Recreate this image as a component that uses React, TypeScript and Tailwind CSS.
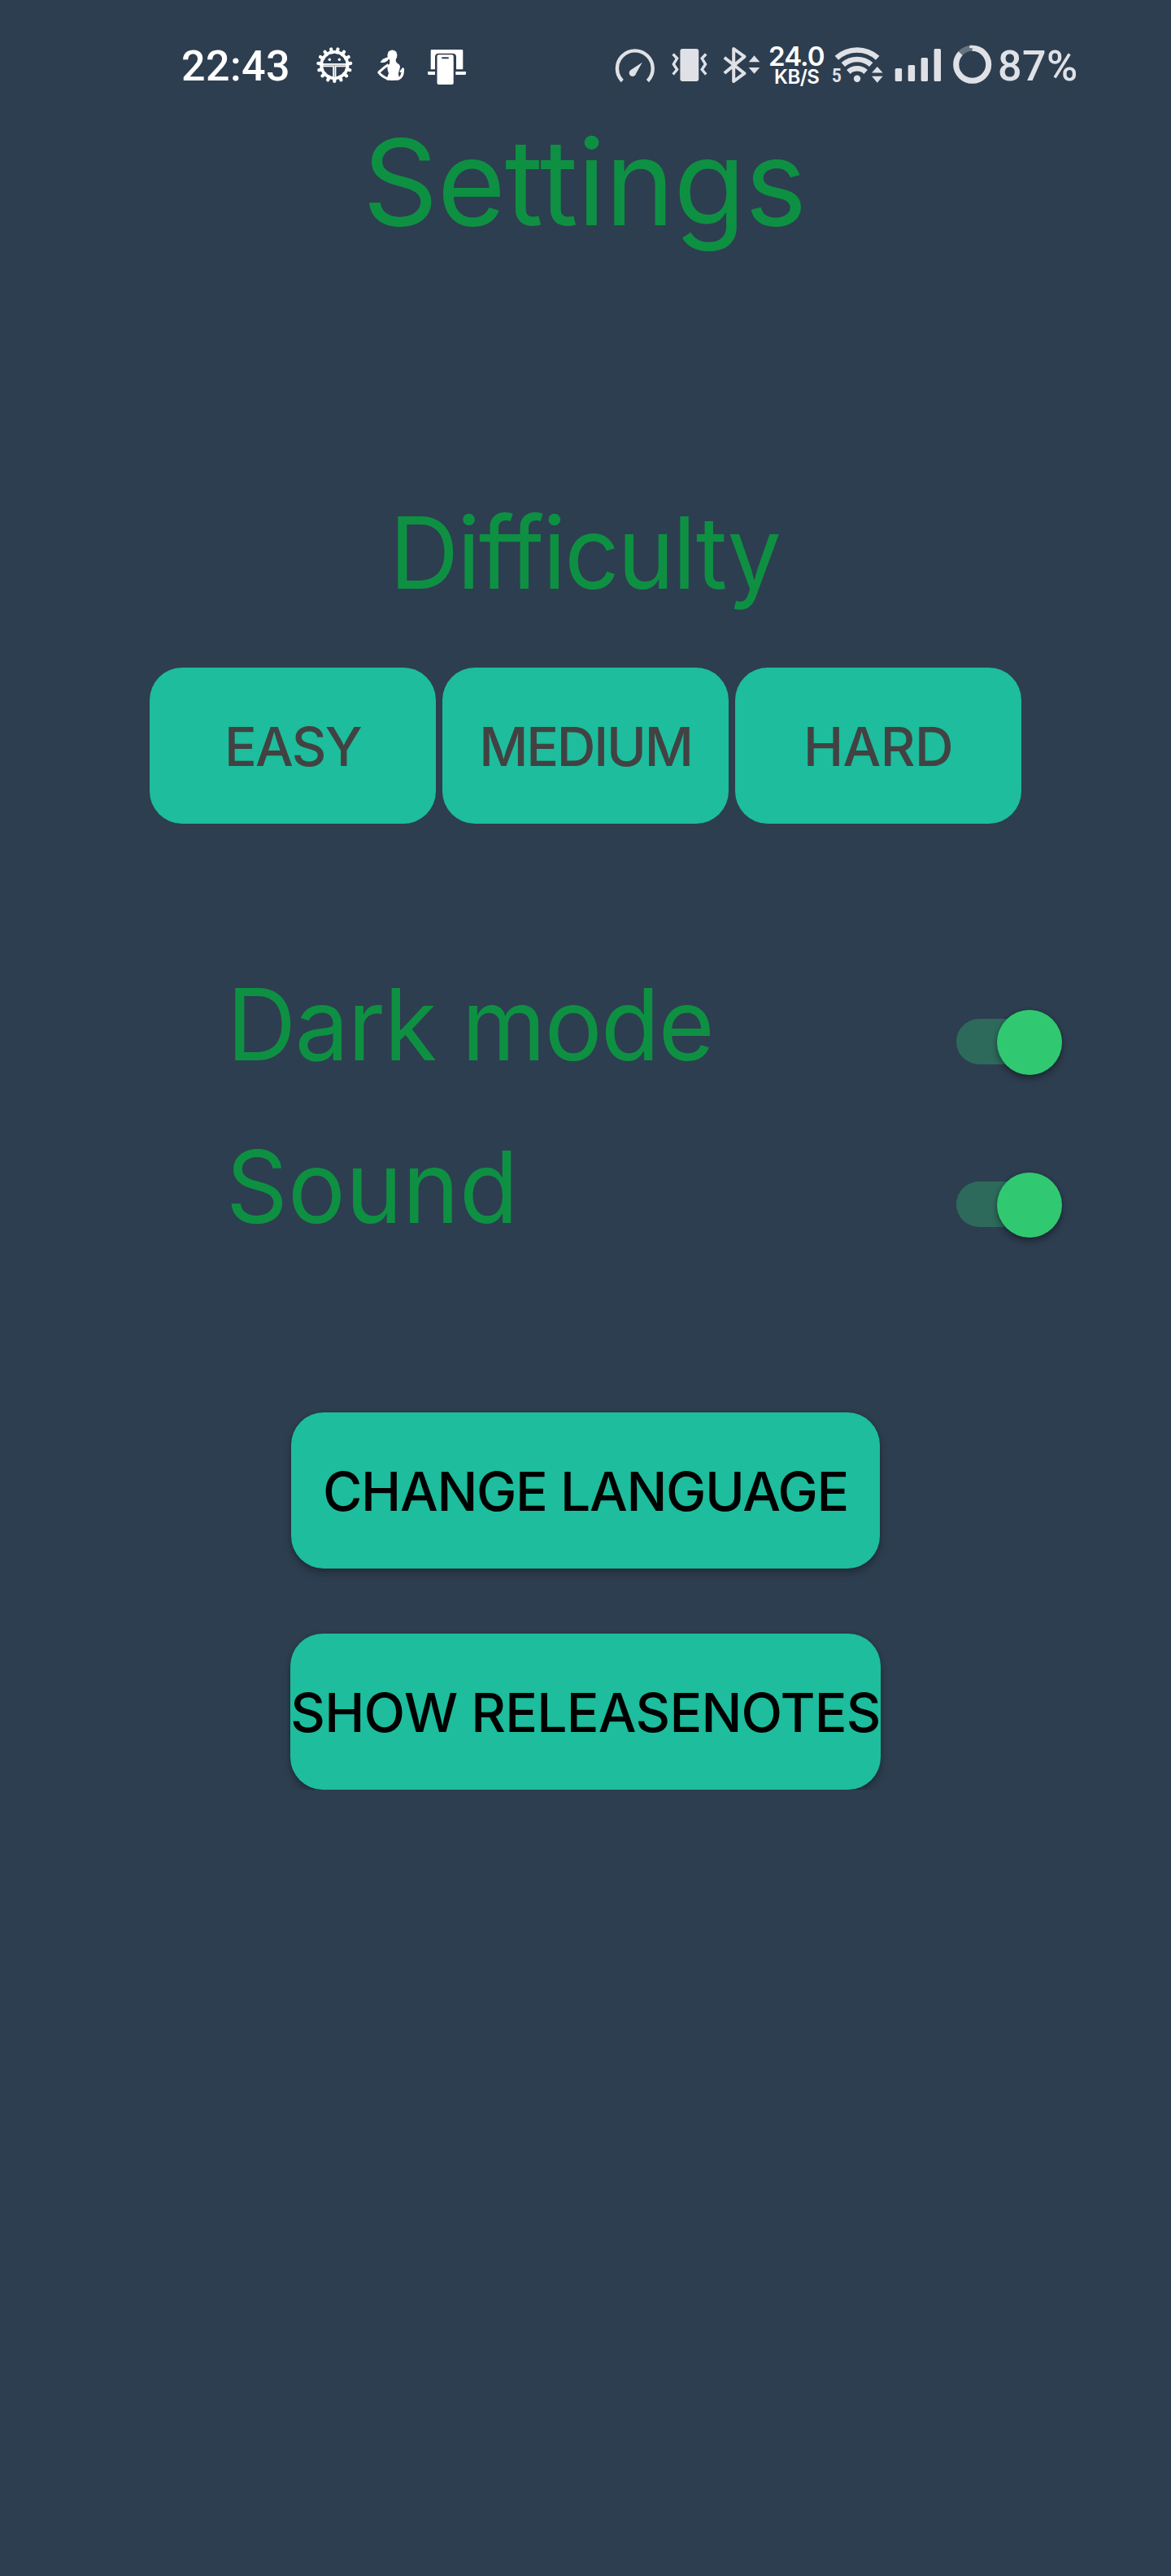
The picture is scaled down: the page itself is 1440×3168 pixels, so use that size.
import React from 'react';

const TEETH = Array.from({ length: 15 }, (_, i) => i * 24 + 12);

function GearIcon() {
  return (
    <svg className="h-[60px] w-[70px] shrink-0" viewBox="385 50 70 60" fill="none">
      {TEETH.map((a) => (
        <path key={a} d="M411.3 64V60" stroke="#fff" strokeWidth="4.2" strokeLinecap="round" transform={`rotate(${a} 411.3 80)`} />
      ))}
      <circle cx="411.3" cy="80" r="16.2" stroke="#fff" strokeWidth="3.8" />
      <path d="M397 80.2H426M411.3 81V95" stroke="#fff" strokeWidth="4.2" />
      <path d="M398 80.2H425M411.3 81V95" stroke="#7d8894" strokeWidth="0.9" />
      <circle cx="405.3" cy="73.3" r="1.7" fill="#fff" />
      <circle cx="417.3" cy="73.3" r="1.7" fill="#fff" />
    </svg>
  );
}

function FigureIcon() {
  return (
    <svg className="h-[60px] w-[60px] shrink-0" viewBox="455 50 60 60" fill="none">
      <ellipse cx="482.4" cy="68" rx="6" ry="6.6" fill="#fff" />
      <path d="M478 70C473 71 470 73 467.6 76.4C471 78 476 76.5 478.5 72Z" fill="#fff" />
      <path d="M479.5 72L487 72C486 76 488 77.5 490.5 79C494 82 490 87 490 91L491 98.3Q482 99.8 475 98.3L478 90C476 85 475.5 81 479 78.5Z" fill="#fff" />
      <path d="M477.5 79.5C472 83 469 86 465.8 89C468 92.5 472 95 478 97.4" stroke="#fff" strokeWidth="3" strokeLinejoin="round" />
      <path d="M488 97C494 96.5 495.5 92 495.5 85" stroke="#fff" strokeWidth="3.2" strokeLinecap="round" />
      <path d="M492.6 88L495.5 84.5" stroke="#fff" strokeWidth="2.2" strokeLinecap="round" />
    </svg>
  );
}

function PhoneLinkIcon() {
  return (
    <svg className="h-[60px] w-[70px] shrink-0" viewBox="515 50 70 60">
      <path fill="#fff" fillRule="evenodd" d="M531 61H568Q569.3 61 569.3 62.3V85.3H561V70Q561 65.7 556.5 65.7H539.5Q535 65.7 535 70V85.3H529.7V62.3Q529.7 61 531 61Z" />
      <path fill="#fff" fillRule="evenodd" d="M539.5 67.3H555.7Q557.7 67.3 557.7 69.3V102Q557.7 104 555.7 104H539.5Q537.5 104 537.5 102V69.3Q537.5 67.3 539.5 67.3ZM543.3 70.3V72.3H551.7V70.3Z" />
      <path fill="#fff" d="M526 88H535V92H527.5Q526 92 526 90.5ZM560.3 88H573V90.5Q573 92 571.5 92H560.3Z" />
    </svg>
  );
}

function GaugeIcon() {
  return (
    <svg className="h-[60px] w-[65px] shrink-0" viewBox="750 50 65 60" fill="none">
      <path d="M765.2 99.6A21.9 21.9 0 1 1 796.4 99.6" stroke="#dfe1e6" strokeWidth="4.4" />
      <path d="M789.8 76.8L782.2 90.2A4.3 4.3 0 1 1 775.7 85.9Z" fill="#dfe1e6" />
    </svg>
  );
}

function VibrateIcon() {
  return (
    <svg className="h-[60px] w-[70px] shrink-0" viewBox="815 50 70 60" fill="none">
      <rect x="836.4" y="60" width="22.8" height="40" rx="3" fill="#dfe1e6" />
      <path d="M827.6 66.5L832.6 71.8L828.3 79L832.6 85.5L827.6 91.5M868.2 66.5L863.2 71.8L867.5 79L863.2 85.5L868.2 91.5" stroke="#dfe1e6" strokeWidth="3.4" />
    </svg>
  );
}

function BluetoothIcon() {
  return (
    <svg className="h-[60px] w-[60px] shrink-0" viewBox="885 50 60 60" fill="none">
      <path d="M890.8 70.7L915.5 90.2L902.2 100V60L915.5 69.6L890.8 90" stroke="#dfe1e6" strokeWidth="4" strokeLinejoin="round" />
      <path d="M920.7 76.2H934.3L927.5 68.3ZM920.7 83H934.3L927.5 90.7Z" fill="#dfe1e6" />
    </svg>
  );
}

function WifiIcon() {
  return (
    <div className="relative h-[60px] w-[68px] shrink-0">
      <svg className="h-[60px] w-[68px]" viewBox="1022 50 68 60" fill="none">
        <path d="M1028.8 71.2A37.5 37.5 0 0 1 1079.2 71.2M1036.8 79.5A26 26 0 0 1 1071.2 79.5M1043.4 88.5A15.5 15.5 0 0 1 1064.6 88.5" stroke="#dfe1e6" strokeWidth="6.6" />
        <circle cx="1054" cy="96.7" r="4.2" fill="#dfe1e6" />
        <path d="M1072 89.5H1085.6L1078.8 82ZM1072 93.7H1085.6L1078.8 101.8Z" fill="#dfe1e6" />
      </svg>
      <span className="absolute top-[31px] left-px origin-left scale-x-85 text-2xl leading-none font-bold text-[#dfe1e6]">5</span>
    </div>
  );
}

function SignalIcon() {
  return (
    <svg className="h-[60px] w-[75px] shrink-0" viewBox="1090 50 75 60" fill="#dfe1e6">
      <rect x="1100.7" y="84" width="8.4" height="16" rx="1.5" />
      <rect x="1116.7" y="80" width="8.4" height="20" rx="1.5" />
      <rect x="1132.6" y="71" width="8.4" height="29" rx="1.5" />
      <rect x="1148.6" y="60" width="8.4" height="40" rx="1.5" />
    </svg>
  );
}

function BatteryIcon() {
  return (
    <svg className="h-[60px] w-[62px] shrink-0" viewBox="1165 50 62 60" fill="none">
      <circle cx="1195.7" cy="79.3" r="20" stroke="#67747f" strokeWidth="7" />
      <circle cx="1195.7" cy="79.3" r="20" pathLength="100" stroke="#dfe1e6" strokeWidth="7" strokeDasharray="87 13" transform="rotate(-90 1195.7 79.3)" />
    </svg>
  );
}

function StatusBar() {
  return (
    <header className="flex h-[110px] pt-[50px] pl-[223px] font-['Roboto'] text-white">
      <div className="w-[162px] shrink-0 pt-1.5 text-[52px] leading-none font-medium tracking-[0.4px]">22:43</div>
      <GearIcon />
      <FigureIcon />
      <PhoneLinkIcon />
      <div className="w-[165px] shrink-0" />
      <GaugeIcon />
      <VibrateIcon />
      <BluetoothIcon />
      <div className="w-[77px] shrink-0 pt-1.5 font-['Inter'] font-semibold">
        <div className="text-[33px] leading-[27px] tracking-[-0.9px]">24.0</div>
        <div className="pl-[7px] text-2xl leading-[23px] tracking-[-0.5px]">KB/S</div>
      </div>
      <WifiIcon />
      <SignalIcon />
      <BatteryIcon />
      <div className="pt-1.5 text-[52px] leading-none font-medium tracking-[0.4px] text-[#dfe1e6]">87%</div>
    </header>
  );
}

function Toggle() {
  return (
    <div className="relative mt-[44px] h-20 w-[130px]" role="switch" aria-checked="true">
      <div className="absolute top-[11px] left-0 h-14 w-[122px] rounded-full bg-[#2e6a5b]" />
      <div className="absolute top-0 right-0 size-20 rounded-full bg-[#30c971] shadow-[0_5px_9px_rgba(0,0,0,0.32),0_0_4px_rgba(0,0,0,0.2)]" />
    </div>
  );
}

function DifficultyButton({ label, tracking }: { label: string; tracking: string }) {
  return (
    <button className={`flex h-48 w-[352px] items-center justify-center rounded-[40px] bg-[#1dbd9d] pt-[2px] text-[66px] leading-none font-medium whitespace-nowrap text-[#424242] ${tracking}`}>
      {label}
    </button>
  );
}

export default function App() {
  return (
    <div className="h-[3168px] w-[1440px] overflow-hidden bg-[#2d3e50] font-['Inter',sans-serif] text-[#0e9042]">
      <StatusBar />
      <h1 className="mt-10 ml-[446px] origin-left scale-x-98 text-[147px] leading-none tracking-[-0.8px]">Settings</h1>
      <h2 className="mt-[321px] ml-[479px] origin-left scale-x-96 text-[123px] leading-none tracking-[-2.1px]">Difficulty</h2>
      <div className="mt-20 flex justify-center gap-2">
        <DifficultyButton label="EASY" tracking="tracking-[-1.7px]" />
        <DifficultyButton label="MEDIUM" tracking="tracking-[-2.2px]" />
        <DifficultyButton label="HARD" tracking="tracking-[-0.6px]" />
      </div>
      <div className="mt-[185px] flex h-[200px] items-start justify-between pr-[134px] pl-[279px]">
        <span className="origin-left scale-x-96 text-[123px] leading-none tracking-[-1.5px] whitespace-nowrap">Dark mode</span>
        <Toggle />
      </div>
      <div className="flex h-[200px] items-start justify-between pr-[134px] pl-[278px]">
        <span className="origin-left scale-x-96 text-[123px] leading-none tracking-[0.2px]">Sound</span>
        <Toggle />
      </div>
      <div className="mt-[139px] flex flex-col items-center gap-16 text-[66px] leading-none font-medium whitespace-nowrap text-black">
        <button className="flex h-48 w-[724px] items-center justify-center rounded-[40px] bg-[#1dbd9d] pt-[2px] tracking-[-1.3px] shadow-[0_6px_10px_rgba(0,0,0,0.25),0_0_4px_rgba(0,0,0,0.15)]">
          CHANGE LANGUAGE
        </button>
        <div className="overflow-hidden px-4 pt-4">
          <button className="flex h-48 w-[726px] items-center justify-center rounded-[40px] bg-[#1dbd9d] pt-[2px] tracking-[-0.76px] shadow-[0_6px_10px_rgba(0,0,0,0.25),0_0_4px_rgba(0,0,0,0.15)]">
            SHOW RELEASENOTES
          </button>
        </div>
      </div>
    </div>
  );
}
